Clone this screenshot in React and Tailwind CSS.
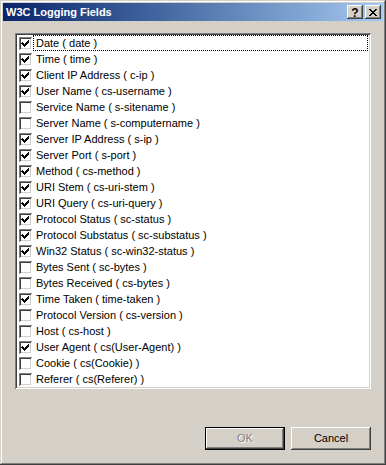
import React from "react";

const campos = [
	["Date ( date )", true],
	["Time ( time )", true],
	["Client IP Address ( c-ip )", true],
	["User Name ( cs-username )", true],
	["Service Name ( s-sitename )", false],
	["Server Name ( s-computername )", false],
	["Server IP Address ( s-ip )", true],
	["Server Port ( s-port )", true],
	["Method ( cs-method )", true],
	["URI Stem ( cs-uri-stem )", true],
	["URI Query ( cs-uri-query )", true],
	["Protocol Status ( sc-status )", true],
	["Protocol Substatus ( sc-substatus )", true],
	["Win32 Status ( sc-win32-status )", true],
	["Bytes Sent ( sc-bytes )", false],
	["Bytes Received ( cs-bytes )", false],
	["Time Taken ( time-taken )", true],
	["Protocol Version ( cs-version )", false],
	["Host ( cs-host )", false],
	["User Agent ( cs(User-Agent) )", true],
	["Cookie ( cs(Cookie) )", false],
	["Referer ( cs(Referer) )", false],
];

const raised =
	"shadow-[inset_-1px_-1px_#404040,inset_1px_1px_#ffffff,inset_-2px_-2px_#808080,inset_2px_2px_#d4d0c8]";

function Casilla({ marcada }) {
	return (
		<div className="w-[13px] h-[13px] shrink-0 bg-white shadow-[inset_1px_1px_#808080,inset_-1px_-1px_#ffffff,inset_2px_2px_#404040,inset_-2px_-2px_#d4d0c8]">
			{marcada && (
				<svg width="13" height="13" viewBox="0 0 13 13" shapeRendering="crispEdges">
					<path
						d="M3 5h1v1h1v1h1v-1h1v-1h1v-1h1v-1h1v3h-1v1h-1v1h-1v1h-1v1h-1v-1h-1v-1h-1v-1h-1z"
						fill="#000"
					/>
				</svg>
			)}
		</div>
	);
}

function BotonTitulo({ children }) {
	return (
		<div className={`w-[16px] h-[14px] bg-[#d4d0c8] flex items-center justify-center ${raised}`}>
			{children}
		</div>
	);
}

export default function App() {
	return (
		<div
			className="w-[386px] h-[465px] bg-[#d4d0c8] p-[3px] flex flex-col shadow-[inset_-1px_-1px_#404040,inset_1px_1px_#d4d0c8,inset_-2px_-2px_#808080,inset_2px_2px_#ffffff]"
			style={{ fontFamily: '"Liberation Sans", Arial, sans-serif' }}>
			<div className="h-[18px] flex items-center pl-[3px] pr-[2px] bg-gradient-to-r from-[#0a246a] to-[#a6caf0]">
				<span className="text-white font-bold text-[11px] leading-none flex-1">
					W3C Logging Fields
				</span>
				<div className="flex gap-[2px]">
					<BotonTitulo>
						<span className="text-black font-bold text-[12px] leading-none mt-[1px]">?</span>
					</BotonTitulo>
					<BotonTitulo>
						<svg width="8" height="7" viewBox="0 0 8 7" shapeRendering="crispEdges">
							<path
								d="M0 0h2v1h1v1h2v-1h1v-1h2v1h-1v1h-1v1h-1v1h1v1h1v1h1v1h-2v-1h-1v-1h-2v1h-1v1h-2v-1h1v-1h1v-1h1v-1h-1v-1h-1v-1h-1z"
								fill="#000"
							/>
						</svg>
					</BotonTitulo>
				</div>
			</div>

			<div className="mt-[12px] mx-[12px] h-[356px] bg-white p-[2px] shadow-[inset_1px_1px_#808080,inset_-1px_-1px_#ffffff,inset_2px_2px_#404040,inset_-2px_-2px_#d4d0c8]">
				{campos.map(([nombre, marcada], i) => (
					<div key={nombre} className="h-[16px] flex items-center pl-[2px] pr-[1px]">
						<Casilla marcada={marcada} />
						<div
							className={`flex-1 h-[16px] ml-[1px] pl-[2px] flex items-center text-[11px] text-black ${
								i === 0 ? "border border-dotted border-black pl-[2px]" : "border border-transparent"
							}`}>
							{nombre}
						</div>
					</div>
				))}
			</div>

			<div className="mt-[38px] mr-[12px] flex justify-end gap-[6px]">
				<div className="w-[80px] h-[23px] border border-black">
					<div className={`w-full h-full bg-[#d4d0c8] flex items-center justify-center ${raised}`}>
						<span className="text-[11px] text-[#808080] [text-shadow:1px_1px_0_#ffffff]">OK</span>
					</div>
				</div>
				<div className={`w-[80px] h-[23px] bg-[#d4d0c8] flex items-center justify-center ${raised}`}>
					<span className="text-[11px] text-black">Cancel</span>
				</div>
			</div>
		</div>
	);
}
